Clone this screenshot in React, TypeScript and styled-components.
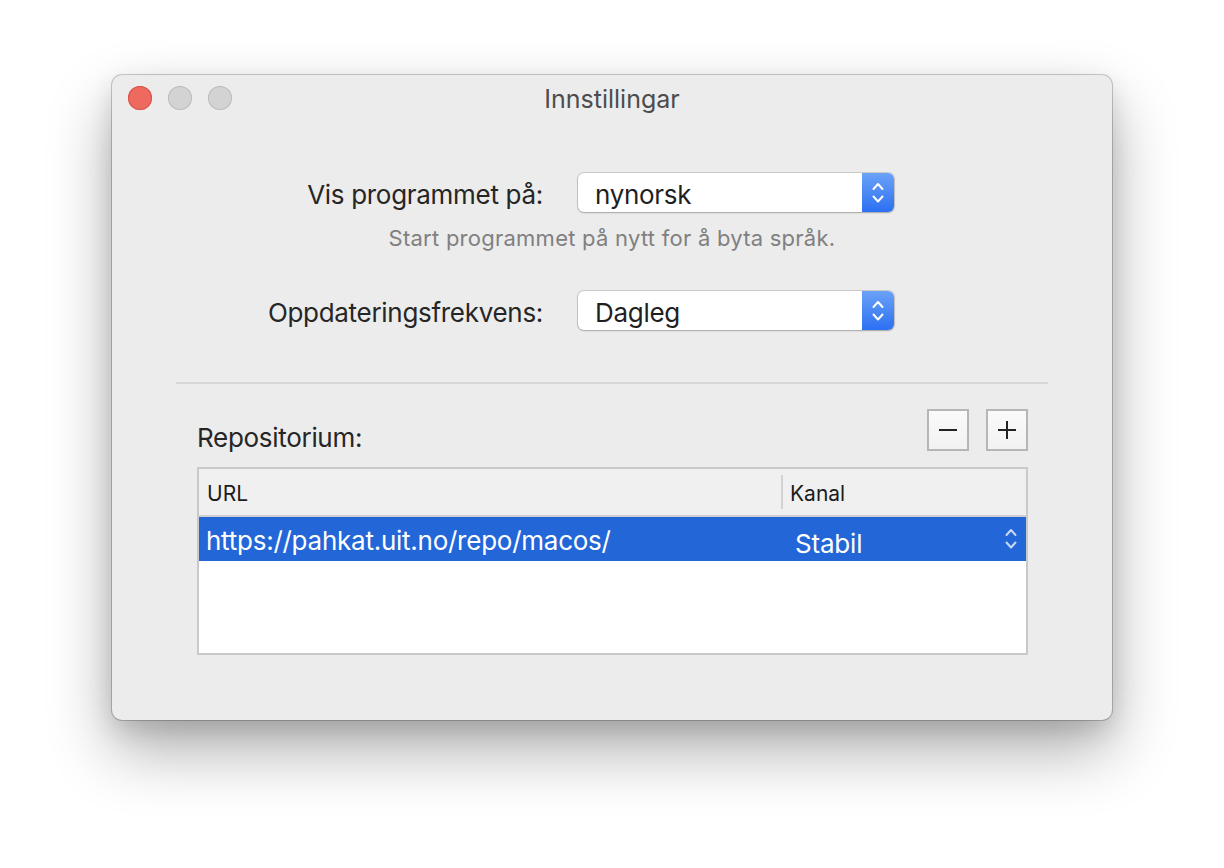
import React from "react";
import styled, { createGlobalStyle } from "styled-components";

const GlobalStyle = createGlobalStyle`
  html, body { margin: 0; padding: 0; background: #ffffff; }
  body { font-family: Inter, "Noto Sans", "Liberation Sans", sans-serif; -webkit-font-smoothing: antialiased; }
  * { box-sizing: border-box; }
`;

const Page = styled.div`
  width: 1224px;
  height: 868px;
  display: flex;
  justify-content: center;
  align-items: flex-start;
  padding-top: 75px;
  overflow: hidden;
`;

const Window = styled.div`
  width: 1000px;
  height: 645px;
  background: #ececec;
  border-radius: 10px;
  box-shadow: 0 0 0 1px rgba(0, 0, 0, 0.2), 0 30px 64px rgba(0, 0, 0, 0.32),
    0 10px 24px rgba(0, 0, 0, 0.12);
  display: flex;
  flex-direction: column;
`;

const TitleBar = styled.div`
  height: 46px;
  display: grid;
  grid-template-columns: 1fr auto 1fr;
  align-items: center;
  padding: 0 16px;
`;

const Lights = styled.div`
  display: flex;
  gap: 16px;
`;

const Light = styled.span<{ $color: string; $border: string }>`
  width: 24px;
  height: 24px;
  border-radius: 50%;
  background: ${(p) => p.$color};
  box-shadow: inset 0 0 0 1px ${(p) => p.$border};
`;

const Title = styled.div`
  font-size: 25px;
  color: #4d4d4d;
  letter-spacing: 0px;
  padding-top: 2px;
`;

const Content = styled.div`
  display: flex;
  flex-direction: column;
  padding-top: 52px;
`;

const FormRow = styled.div`
  display: grid;
  grid-template-columns: 431px 316px;
  column-gap: 35px;
  align-items: center;
`;

const Label = styled.label`
  text-align: right;
  font-size: 26px;
  color: #262626;
  letter-spacing: -0.3px;
  padding-top: 4px;
`;

const Popup = styled.div`
  height: 39px;
  background: #ffffff;
  border-radius: 6px;
  box-shadow: 0 0 0 1px rgba(0, 0, 0, 0.14), 0 1px 2px rgba(0, 0, 0, 0.18);
  display: flex;
  align-items: center;
  overflow: hidden;
`;

const PopupText = styled.span`
  flex: 1;
  padding-left: 17px;
  padding-top: 4px;
  font-size: 26px;
  color: #1f1f1f;
  letter-spacing: -0.3px;
`;

const Stepper = styled.span`
  width: 32px;
  height: 100%;
  background: linear-gradient(#6ba2f7, #2c70f3);
  display: flex;
  align-items: center;
  justify-content: center;
`;

const Hint = styled.div`
  margin-top: 13px;
  text-align: center;
  font-size: 22px;
  line-height: 26px;
  color: #808080;
  letter-spacing: 0.25px;
`;

const SecondRow = styled(FormRow)`
  margin-top: 40px;
`;

const Separator = styled.hr`
  margin: 52px 64px 0;
  border: none;
  height: 2px;
  background: #d6d6d6;
`;

const RepoSection = styled.div`
  padding: 25px 84px 0 85px;
  display: flex;
  flex-direction: column;
`;

const RepoHeader = styled.div`
  display: flex;
  align-items: center;
  justify-content: space-between;
  height: 42px;
`;

const RepoLabel = styled.span`
  font-size: 26px;
  color: #262626;
  letter-spacing: -0.3px;
  padding-top: 14px;
`;

const ButtonGroup = styled.div`
  display: flex;
  gap: 17px;
`;

const SquareButton = styled.button`
  width: 42px;
  height: 42px;
  padding: 0;
  border: 2px solid #b6b6b6;
  background: linear-gradient(#fafafa, #f2f2f2);
  display: flex;
  align-items: center;
  justify-content: center;
`;

const Table = styled.div`
  margin-top: 16px;
  height: 188px;
  border: 2px solid #c9c9c9;
  background: #ffffff;
  display: flex;
  flex-direction: column;
`;

const HeaderRow = styled.div`
  height: 48px;
  background: #f0f0f0;
  border-bottom: 2px solid #cfcfcf;
  display: grid;
  grid-template-columns: 582px 1fr;
  align-items: center;
`;

const HeaderCell = styled.div<{ $divider?: boolean }>`
  font-size: 21px;
  color: #1c1c1c;
  height: 34px;
  display: flex;
  align-items: center;
  padding-top: 3px;
  padding-left: ${(p) => (p.$divider ? "7px" : "8px")};
  border-left: ${(p) => (p.$divider ? "2px solid #d3d3d3" : "none")};
`;

const DataRow = styled.div<{ $selected?: boolean }>`
  height: 44px;
  background: ${(p) => (p.$selected ? "#2266d8" : "transparent")};
  display: grid;
  grid-template-columns: 582px 1fr;
  align-items: center;
  color: ${(p) => (p.$selected ? "#ffffff" : "#1c1c1c")};
`;

const Cell = styled.div`
  font-size: 26px;
  padding-left: 7px;
  padding-top: 2px;
  letter-spacing: -0.25px;
`;

const ChannelCell = styled.div`
  font-size: 26px;
  padding-left: 14px;
  padding-right: 8px;
  display: flex;
  align-items: center;
  justify-content: space-between;
  letter-spacing: -0.2px;
`;

const ChannelText = styled.span`
  padding-top: 8px;
`;

const Chevrons = ({ color, width = 12 }: { color: string; width?: number }) => (
  <svg width={width} height="24" viewBox="0 0 12 24" fill="none">
    <path d="M1.5 8 L6 3 L10.5 8" stroke={color} strokeWidth="2" strokeLinecap="round" strokeLinejoin="round" />
    <path d="M1.5 15.5 L6 20.5 L10.5 15.5" stroke={color} strokeWidth="2" strokeLinecap="round" strokeLinejoin="round" />
  </svg>
);

export default function App() {
  return (
    <>
      <GlobalStyle />
      <Page>
        <Window>
          <TitleBar>
            <Lights>
              <Light $color="#ee6a5f" $border="#d8524a" />
              <Light $color="#d3d3d3" $border="#bdbdbd" />
              <Light $color="#d3d3d3" $border="#bdbdbd" />
            </Lights>
            <Title>Innstillingar</Title>
            <span />
          </TitleBar>
          <Content>
            <FormRow>
              <Label>Vis programmet på:</Label>
              <Popup>
                <PopupText>nynorsk</PopupText>
                <Stepper>
                  <Chevrons color="#ffffff" />
                </Stepper>
              </Popup>
            </FormRow>
            <Hint>Start programmet på nytt for å byta språk.</Hint>
            <SecondRow>
              <Label>Oppdateringsfrekvens:</Label>
              <Popup>
                <PopupText>Dagleg</PopupText>
                <Stepper>
                  <Chevrons color="#ffffff" />
                </Stepper>
              </Popup>
            </SecondRow>
            <Separator />
            <RepoSection>
              <RepoHeader>
                <RepoLabel>Repositorium:</RepoLabel>
                <ButtonGroup>
                  <SquareButton aria-label="Fjern">
                    <svg width="22" height="22" viewBox="0 0 22 22">
                      <path d="M2 11 H20" stroke="#222" strokeWidth="2" />
                    </svg>
                  </SquareButton>
                  <SquareButton aria-label="Legg til">
                    <svg width="22" height="22" viewBox="0 0 22 22">
                      <path d="M2 11 H20 M11 2 V20" stroke="#222" strokeWidth="2" />
                    </svg>
                  </SquareButton>
                </ButtonGroup>
              </RepoHeader>
              <Table>
                <HeaderRow>
                  <HeaderCell>URL</HeaderCell>
                  <HeaderCell $divider>Kanal</HeaderCell>
                </HeaderRow>
                <DataRow $selected>
                  <Cell>https://pahkat.uit.no/repo/macos/</Cell>
                  <ChannelCell>
                    <ChannelText>Stabil</ChannelText>
                    <Chevrons color="#c9d9f5" width={14} />
                  </ChannelCell>
                </DataRow>
              </Table>
            </RepoSection>
          </Content>
        </Window>
      </Page>
    </>
  );
}
